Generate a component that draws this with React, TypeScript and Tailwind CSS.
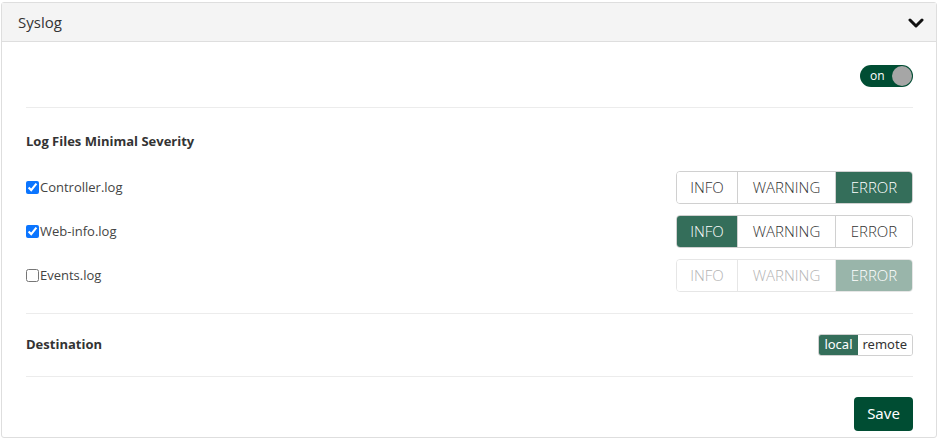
import React from "react";

const font = { fontFamily: '"Open Sans", "Liberation Sans", sans-serif' };

function SevGroup({ active, disabled }: { active: string; disabled?: boolean }) {
  const items = [
    { k: "INFO", w: "w-[60px]" },
    { k: "WARNING", w: "w-[98px]" },
    { k: "ERROR", w: "w-[77px]" },
  ];
  return (
    <div
      className={`flex h-[33px] rounded-[4px] border ${
        disabled ? "border-[#e6e6e6]" : "border-[#d0d0d0]"
      } overflow-hidden`}
    >
      {items.map((it, i) => {
        const on = it.k === active;
        let cls = "";
        if (on) cls = disabled ? "bg-[#99b5aa] text-white" : "bg-[#346e5a] text-white";
        else cls = disabled ? "bg-white text-[#b3b3b3]" : "bg-white text-[#333]";
        const border =
          i > 0
            ? disabled
              ? "border-l border-[#e6e6e6]"
              : "border-l border-[#d0d0d0]"
            : "";
        return (
          <div
            key={it.k}
            className={`${it.w} ${cls} ${border} flex items-center justify-center text-[15px] font-light`}
          >
            {it.k}
          </div>
        );
      })}
    </div>
  );
}

function Row({ label, checked, active, disabled }: { label: string; checked: boolean; active: string; disabled?: boolean }) {
  return (
    <div className="flex items-center justify-between h-[44px]">
      <label className="flex items-center text-[13px] text-[#444]">
        <input type="checkbox" defaultChecked={checked} className="w-[13px] h-[13px] m-0 mr-px accent-[#0b75ff]" />
        {label}
      </label>
      <SevGroup active={active} disabled={disabled} />
    </div>
  );
}

export default function App() {
  return (
    <div className="w-[938px] h-[439px] bg-white pt-[2px] pl-px pr-[1px]" style={font}>
      <div className="border border-[#dedede] rounded-[3px] h-[436px] flex flex-col">
        <div className="h-[39px] bg-[#f4f4f4] border-b border-[#dedede] flex items-center justify-between pl-[16px] pr-[12px]">
          <span className="text-[15px] text-[#333]">Syslog</span>
          <svg width="16" height="12" viewBox="0 0 16 12" className="mt-px">
            <path d="M2 3 L8 9 L14 3" fill="none" stroke="#111" strokeWidth="3" strokeLinecap="round" strokeLinejoin="round" />
          </svg>
        </div>
        <div className="pl-[24px] pr-[23px] flex flex-col">
          <div className="h-[66px] flex items-center justify-end border-b border-[#ececec] pt-[2px]">
            <div className="w-[53px] h-[22px] rounded-full bg-[#004d33] flex items-center justify-between pl-[10px] pr-px">
              <span className="text-white text-[12px] leading-none">on</span>
              <span className="w-[20px] h-[20px] rounded-full bg-[#a6a6a6]" />
            </div>
          </div>
          <div className="pt-[24px] text-[13px] font-bold text-[#333]">Log Files Minimal Severity</div>
          <div className="mt-[14px] flex flex-col">
            <Row label="Controller.log" checked active="ERROR" />
            <Row label="Web-info.log" checked active="INFO" />
            <Row label="Events.log" checked={false} active="ERROR" disabled />
          </div>
          <div className="mt-[15px] border-t border-[#ececec] h-[63px] flex items-center justify-between">
            <span className="text-[13px] font-bold text-[#333]">Destination</span>
            <div className="flex h-[22px] rounded-[3px] border border-[#d0d0d0] overflow-hidden text-[13px]" style={{ fontFamily: '"Noto Sans", "Open Sans", sans-serif' }}>
              <div className="bg-[#346e5a] text-white px-[5px] flex items-center">local</div>
              <div className="bg-white text-[#333] px-[5px] flex items-center">remote</div>
            </div>
          </div>
          <div className="border-t border-[#ececec] pt-[20px] flex justify-end">
            <button className="w-[59px] h-[34px] rounded-[4px] bg-[#004d33] text-white text-[15px]" style={{ fontFamily: '"Noto Sans", "Open Sans", sans-serif' }}>
              Save
            </button>
          </div>
        </div>
      </div>
    </div>
  );
}
